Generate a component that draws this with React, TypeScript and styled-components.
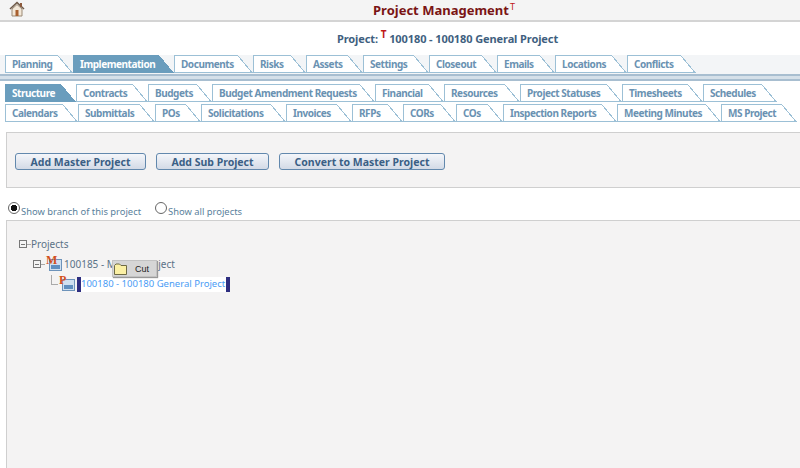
import styled, { createGlobalStyle } from 'styled-components'

const GlobalStyle = createGlobalStyle`
  html, body {
    margin: 0;
    padding: 0;
    background: #fff;
    font-family: "Noto Sans", "DejaVu Sans", sans-serif;
  }
`

interface TabData {
  label: string
  width: number
  active?: boolean
}

const mainTabs: TabData[] = [
  { label: 'Planning', width: 68 },
  { label: 'Implementation', width: 101, active: true },
  { label: 'Documents', width: 79 },
  { label: 'Risks', width: 53 },
  { label: 'Assets', width: 57 },
  { label: 'Settings', width: 66 },
  { label: 'Closeout', width: 68 },
  { label: 'Emails', width: 58 },
  { label: 'Locations', width: 72 },
  { label: 'Conflicts', width: 69 },
]

const subTabs: TabData[] = [
  { label: 'Structure', width: 71, active: true },
  { label: 'Contracts', width: 72 },
  { label: 'Budgets', width: 64 },
  { label: 'Budget Amendment Requests', width: 163 },
  { label: 'Financial', width: 69 },
  { label: 'Resources', width: 76 },
  { label: 'Project Statuses', width: 102 },
  { label: 'Timesheets', width: 81 },
  { label: 'Schedules', width: 74 },
]

const moreTabs: TabData[] = [
  { label: 'Calendars', width: 73 },
  { label: 'Submittals', width: 77 },
  { label: 'POs', width: 46 },
  { label: 'Solicitations', width: 85 },
  { label: 'Invoices', width: 66 },
  { label: 'RFPs', width: 51 },
  { label: 'CORs', width: 53 },
  { label: 'COs', width: 47 },
  { label: 'Inspection Reports', width: 114 },
  { label: 'Meeting Minutes', width: 104 },
  { label: 'MS Project', width: 76 },
]

function TabRow({ tabs }: { tabs: TabData[] }) {
  return (
    <Tabs>
      {tabs.map((tab) => (
        <Tab key={tab.label} $width={tab.width} $active={tab.active}>
          {tab.label}
        </Tab>
      ))}
    </Tabs>
  )
}

function HomeIcon() {
  return (
    <svg width="16" height="16" viewBox="0 0 16 16">
      <path d="M1 8 8 1.5 15 8" fill="none" stroke="#6f5a48" strokeWidth="1.6" />
      <rect x="11" y="2" width="2" height="4" fill="#8c5a3c" />
      <path d="M3 8 8 3.5 13 8V15H3Z" fill="#f3e8d8" stroke="#9a8975" />
      <rect x="6.5" y="9" width="3" height="6" fill="#a8602f" />
    </svg>
  )
}

function FolderIcon() {
  return (
    <svg width="14" height="12" viewBox="0 0 14 12">
      <path
        d="M.5 2.5 2 1h3.5L7 2.5h5.5v9H.5Z"
        fill="#fbf0a4"
        stroke="#6e6a45"
      />
    </svg>
  )
}

function NodeIcon({ letter }: { letter: string }) {
  return (
    <NodeGlyph>
      <svg width="15" height="14" viewBox="0 0 15 14">
        <rect x="2.5" y="2.5" width="12" height="11" fill="#cfe0f0" stroke="#6d93ba" />
        <rect x="4" y="8" width="9" height="4" fill="#5f8fc0" />
      </svg>
      <NodeLetter>{letter}</NodeLetter>
    </NodeGlyph>
  )
}

export default function App() {
  return (
    <Page>
      <GlobalStyle />
      <Header>
        <HomeLink>
          <HomeIcon />
        </HomeLink>
        <Title>
          Project Management<TitleMark>T</TitleMark>
        </Title>
      </Header>
      <ProjectLine>
        Project: <ProjectMark>T</ProjectMark> 100180 - 100180 General Project
      </ProjectLine>

      <MainTabStrip>
        <TabRow tabs={mainTabs} />
      </MainTabStrip>
      <Rule />
      <SubTabs>
        <TabRow tabs={subTabs} />
        <TabRow tabs={moreTabs} />
      </SubTabs>

      <ActionPanel>
        <ActionButton $width={131}>Add Master Project</ActionButton>
        <ActionButton $width={113}>Add Sub Project</ActionButton>
        <ActionButton $width={166}>Convert to Master Project</ActionButton>
      </ActionPanel>

      <RadioRow>
        <RadioOption>
          <Radio $checked />
          <RadioLabel>Show branch of this project</RadioLabel>
        </RadioOption>
        <RadioOption>
          <Radio />
          <RadioLabel>Show all projects</RadioLabel>
        </RadioOption>
      </RadioRow>

      <TreePanel>
        <TreeRow>
          <Expander />
          <TreeDash />
          <TreeText>Projects</TreeText>
        </TreeRow>
        <TreeRow $indent={14}>
          <Expander />
          <TreeDash />
          <NodeIcon letter="M" />
          <TreeText>100185 - Master Project</TreeText>
        </TreeRow>
        <TreeRow $indent={32}>
          <Elbow />
          <NodeIcon letter="P" />
          <Selected>100180 - 100180 General Project</Selected>
        </TreeRow>
        <CutMenu>
          <FolderIcon />
          Cut
        </CutMenu>
      </TreePanel>
    </Page>
  )
}

const Page = styled.div`
  width: 800px;
  height: 468px;
  overflow: hidden;
  background: #fff;
`

const Header = styled.header`
  position: relative;
  display: flex;
  align-items: center;
  justify-content: center;
  height: 20px;
  padding-left: 88px;
  background: #f4f4f4;
  border-bottom: 2px solid #d4d4d4;
`

const HomeLink = styled.a`
  position: absolute;
  left: 9px;
  top: 1px;
  line-height: 0;
`

const Title = styled.h1`
  margin: 0;
  font-size: 13px;
  font-weight: bold;
  color: #7a1414;
`

const TitleMark = styled.sup`
  margin-left: 1px;
  font-size: 9px;
  font-weight: normal;
  line-height: 0;
  color: #c01818;
`

const ProjectLine = styled.div`
  height: 33px;
  line-height: 34px;
  padding-left: 337px;
  font-size: 11px;
  font-weight: bold;
  letter-spacing: -0.1px;
  color: #3f5f80;
`

const ProjectMark = styled.sup`
  font-size: 10px;
  line-height: 0;
  color: #c01818;
`

const MainTabStrip = styled.div`
  padding: 0 0 1px 5px;
  background: #f3f5f7;
`

const Rule = styled.div`
  height: 7px;
  border-top: 2px solid #a8bed0;
  border-bottom: 2px solid #a8bed0;
  background: #d5e0e9;
  box-sizing: border-box;
`

const SubTabs = styled.div`
  display: flex;
  flex-direction: column;
  gap: 2px;
  padding: 3px 0 0 5px;
`

const Tabs = styled.div`
  display: flex;
  height: 18px;
`

const Tab = styled.div<{ $width: number; $active?: boolean }>`
  --fill: ${(p) => (p.$active ? '#6a9dbd' : '#fff')};
  --edge: ${(p) => (p.$active ? '#6a9dbd' : '#9cc0d6')};
  box-sizing: border-box;
  width: ${(p) => p.$width}px;
  height: 18px;
  padding-left: 7px;
  line-height: 18px;
  font-size: 10px;
  font-weight: bold;
  letter-spacing: -0.45px;
  white-space: nowrap;
  color: ${(p) => (p.$active ? '#fff' : '#6a92b2')};
  background:
    linear-gradient(var(--edge), var(--edge)) left top / calc(100% - 15px) 1px no-repeat,
    linear-gradient(var(--edge), var(--edge)) left bottom / 100% 1px no-repeat,
    linear-gradient(var(--edge), var(--edge)) left top / 1px 100% no-repeat,
    linear-gradient(var(--fill), var(--fill)) left top / calc(100% - 15px) 100% no-repeat,
    linear-gradient(
      to top right,
      var(--fill) calc(50% - 1px),
      var(--edge) calc(50% - 1px),
      var(--edge) 50%,
      transparent 50%
    ) right top / 15px 100% no-repeat;
`

const ActionPanel = styled.div`
  display: flex;
  align-items: center;
  gap: 10px;
  height: 56px;
  margin: 10px 0 0 6px;
  padding: 3px 0 0 8px;
  box-sizing: border-box;
  background: #f4f3f3;
  border: 1px solid #cfcfcf;
  border-right: 0;
`

const ActionButton = styled.button<{ $width: number }>`
  width: ${(p) => p.$width}px;
  height: 17px;
  padding: 0;
  font-family: inherit;
  font-size: 10.5px;
  font-weight: bold;
  line-height: 14px;
  color: #3b5f85;
  background: linear-gradient(#f4f6fa, #d3dae6);
  border: 1px solid #6288ad;
  border-radius: 3px;
`

const RadioRow = styled.div`
  display: flex;
  gap: 14px;
  height: 32px;
  padding: 14px 0 0 8px;
  box-sizing: border-box;
`

const RadioOption = styled.label`
  display: flex;
  align-items: flex-start;
  gap: 1px;
`

const RadioLabel = styled.span`
  padding-top: 3px;
  font-size: 9.4px;
  line-height: 13px;
  color: #5a7f9c;
`

const Radio = styled.span<{ $checked?: boolean }>`
  box-sizing: border-box;
  width: 12px;
  height: 12px;
  border: 1px solid #666;
  border-radius: 50%;
  background: ${(p) =>
    p.$checked ? 'radial-gradient(circle, #111 0 3px, #fff 3.5px)' : '#fff'};
`

const TreePanel = styled.section`
  position: relative;
  height: 250px;
  margin-left: 6px;
  padding: 13px 0 0 12px;
  box-sizing: border-box;
  background: #f4f3f3;
  border: 1px solid #cfcfcf;
  border-right: 0;
`

const TreeRow = styled.div<{ $indent?: number }>`
  display: flex;
  align-items: center;
  height: 20px;
  padding-left: ${(p) => p.$indent ?? 0}px;
`

const Expander = styled.span`
  box-sizing: border-box;
  width: 8px;
  height: 8px;
  border: 1px solid #777;
  background: linear-gradient(#777, #777) center / 4px 1px no-repeat #f4f4f4;
`

const TreeDash = styled.span`
  width: 4px;
  height: 1px;
  background: #aaa;
`

const TreeText = styled.span`
  font-size: 10px;
  color: #5a7287;
`

const Elbow = styled.span`
  align-self: flex-start;
  box-sizing: border-box;
  width: 7px;
  height: 10px;
  margin-top: 1px;
  border-left: 1px solid #aaa;
  border-bottom: 1px solid #aaa;
`

const NodeGlyph = styled.span`
  position: relative;
  display: inline-block;
  width: 15px;
  height: 14px;
  line-height: 0;
  margin: 0 2px 0 2px;
`

const NodeLetter = styled.b`
  position: absolute;
  left: -1px;
  top: 3px;
  font-family: "Liberation Serif", serif;
  font-size: 12px;
  line-height: 0;
  color: #d2501c;
`

const Selected = styled.span`
  padding: 0 1px 0 0;
  height: 15px;
  line-height: 14px;
  font-size: 9.5px;
  color: #4a9cf5;
  background: #fff;
  border-left: 4px solid #2e2e80;
  border-right: 4px solid #2e2e80;
`

const CutMenu = styled.div`
  position: absolute;
  left: 105px;
  top: 39px;
  display: flex;
  align-items: center;
  gap: 7px;
  box-sizing: border-box;
  width: 45px;
  height: 17px;
  padding-left: 1px;
  font-family: "Liberation Sans", sans-serif;
  font-size: 9px;
  color: #222;
  background: #d6d6d6;
  border: 1px solid #c2c2c2;
  box-shadow: 1px 1px 1px #999;
`
